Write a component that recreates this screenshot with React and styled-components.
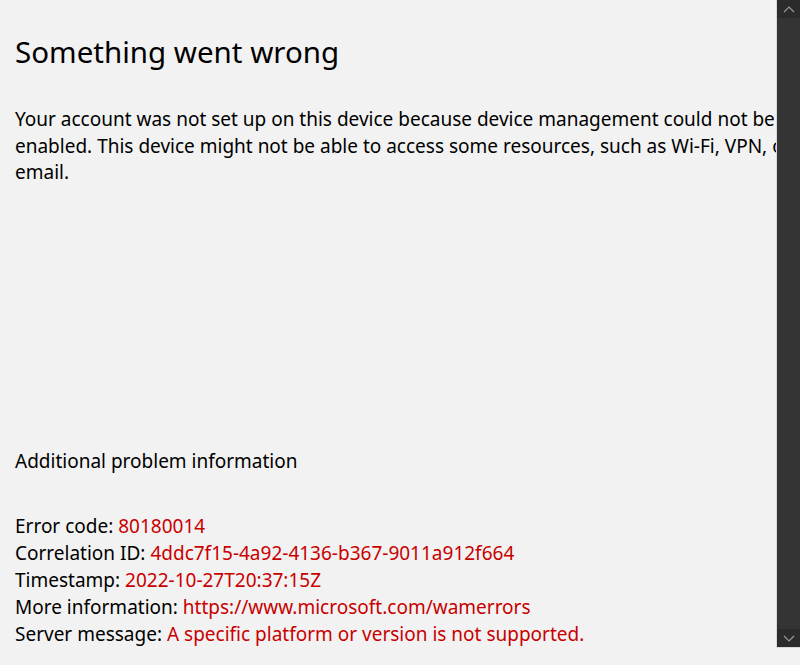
import React from "react";
import styled, { createGlobalStyle } from "styled-components";

const GlobalStyle = createGlobalStyle`
  html, body {
    margin: 0;
    padding: 0;
    background: #f2f2f2;
    overflow: hidden;
  }
`;

const Page = styled.div`
  position: relative;
  width: 800px;
  height: 665px;
  overflow: hidden;
  background: #f2f2f2;
  font-family: "Noto Sans", "Open Sans", sans-serif;
  color: #000;
`;

const Content = styled.div`
  width: 800px;
  padding: 30px 0 0 15px;
  display: flex;
  flex-direction: column;
  box-sizing: border-box;
  height: 100%;
`;

const Title = styled.h1`
  margin: 0;
  font-size: 29.5px;
  font-weight: 400;
  line-height: 44px;
`;

const Message = styled.p`
  margin: 32px 0 0;
  font-size: 19px;
  line-height: 26.5px;
  width: 800px;
`;

const SectionTitle = styled.h2`
  margin: 262px 0 0;
  font-size: 19px;
  font-weight: 400;
  line-height: 27px;
`;

const Details = styled.div`
  margin-top: 38px;
  display: flex;
  flex-direction: column;
`;

const Row = styled.div`
  font-size: 19px;
  line-height: 27.2px;
  white-space: nowrap;
`;

const Value = styled.span`
  color: #c80000;
`;

const Scrollbar = styled.div`
  position: absolute;
  top: 0;
  right: 0;
  width: 23px;
  height: 647px;
  background: #343434;
  border-left: 1px solid #d9d9d9;
  border-bottom: 1px solid #d9d9d9;
  display: flex;
  flex-direction: column;
  justify-content: space-between;
`;

const ArrowButton = styled.div`
  height: 18px;
  background: #2b2b2b;
  display: flex;
  align-items: center;
  justify-content: center;
`;

const rows = [
  ["Error code:", "80180014"],
  ["Correlation ID:", "4ddc7f15-4a92-4136-b367-9011a912f664"],
  ["Timestamp:", "2022-10-27T20:37:15Z"],
  ["More information:", "https://www.microsoft.com/wamerrors"],
  ["Server message:", "A specific platform or version is not supported."],
];

export default function App() {
  return (
    <Page>
      <GlobalStyle />
      <Content>
        <Title>Something went wrong</Title>
        <Message>
          Your account was not set up on this device because device management
          could not be enabled. This device might not be able to access some
          resources, such as Wi-Fi, VPN, or email.
        </Message>
        <SectionTitle>Additional problem information</SectionTitle>
        <Details>
          {rows.map(([label, value]) => (
            <Row key={label}>
              {label} <Value>{value}</Value>
            </Row>
          ))}
        </Details>
      </Content>
      <Scrollbar>
        <ArrowButton>
          <svg width="12" height="7" viewBox="0 0 12 7">
            <path d="M1 6 L6 1 L11 6" fill="none" stroke="#9a9a9a" strokeWidth="1.2" />
          </svg>
        </ArrowButton>
        <ArrowButton>
          <svg width="12" height="7" viewBox="0 0 12 7">
            <path d="M1 1 L6 6 L11 1" fill="none" stroke="#9a9a9a" strokeWidth="1.2" />
          </svg>
        </ArrowButton>
      </Scrollbar>
    </Page>
  );
}
